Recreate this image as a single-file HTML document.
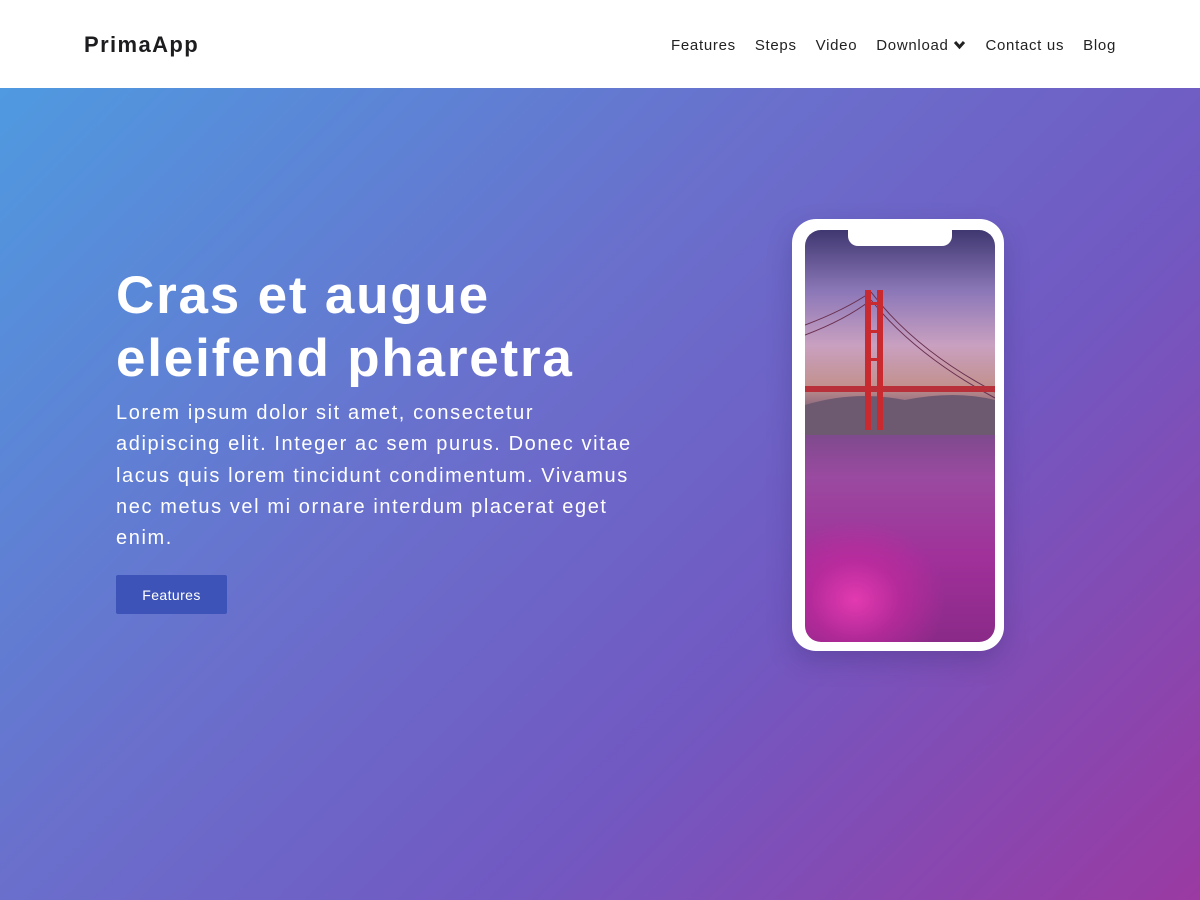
<!DOCTYPE html>
<html><head><style>
*{margin:0;padding:0;box-sizing:border-box}
body{width:1200px;height:900px;overflow:hidden;font-family:"Liberation Sans",sans-serif}
header{height:88px;background:#fff;position:relative}
.logo{position:absolute;left:84px;top:32px;font-size:22px;font-weight:bold;color:#1d1d1f;letter-spacing:1.4px}
nav{position:absolute;right:84px;top:37px;font-size:15px;color:#222;display:flex;gap:19px;letter-spacing:0.7px}
.hero{position:absolute;top:88px;left:0;width:1200px;height:812px;background:linear-gradient(135deg,#4f9ae0 0%,#6a6fcc 40%,#7159c2 65%,#9a3aa2 100%)}
h1{position:absolute;left:116px;top:176px;color:#fff;font-size:53px;line-height:63px;font-weight:bold;letter-spacing:1.8px}
p{position:absolute;left:116px;top:310px;width:520px;color:#fff;font-size:20px;line-height:31.3px;letter-spacing:1.6px}
.btn{position:absolute;left:116px;top:487px;width:111px;height:39px;background:#3d53b8;color:#fff;font-size:14px;text-align:center;line-height:41px;border-radius:2px;letter-spacing:0.4px}
.phone{position:absolute;left:792px;top:131px;width:212px;height:432px;background:#fff;border-radius:24px;box-shadow:0 10px 25px rgba(40,30,90,.25)}
.screen{position:absolute;left:13px;top:11px;width:190px;height:412px;border-radius:16px;overflow:hidden;
background:radial-gradient(ellipse 90px 80px at 50px 370px,#e33ab0 0%,rgba(200,40,160,.6) 50%,transparent 100%),linear-gradient(180deg,#3f3770 0%,#8c78b8 15%,#c9a0c0 28%,#c2918e 38%,#80607a 44%,#7a4a8a 48%,#9a4aa0 60%,#a0309a 80%,#8a2a88 100%)}
.notch{position:absolute;left:43px;top:0;width:104px;height:16px;background:#fff;border-radius:0 0 10px 10px}
</style></head><body>
<header><div class="logo">PrimaApp</div>
<nav><span>Features</span><span>Steps</span><span>Video</span><span>Download <svg width="13" height="10" viewBox="0 0 13 10" style="vertical-align:0"><path d="M2 2 L6.5 7 L11 2" stroke="#222" stroke-width="3" fill="none"/></svg></span><span>Contact us</span><span>Blog</span></nav></header>
<div class="hero">
<h1>Cras et augue<br>eleifend pharetra</h1>
<p>Lorem ipsum dolor sit amet, consectetur adipiscing elit. Integer ac sem purus. Donec vitae lacus quis lorem tincidunt condimentum. Vivamus nec metus vel mi ornare interdum placerat eget enim.</p>
<div class="btn">Features</div>
<div class="phone"><div class="screen">
<svg width="190" height="412" style="position:absolute;left:0;top:0">
<path d="M0 95 Q40 80 66 62 M66 62 Q110 120 190 162 M0 105 Q40 90 66 70 M66 70 Q110 125 190 168" stroke="#6a3050" stroke-width="1" fill="none"/>
<path d="M0 175 Q50 160 100 170 Q150 160 190 170 L190 205 L0 205Z" fill="#6e5a70"/>
<rect x="0" y="156" width="190" height="6" fill="#b8303a"/>
<rect x="60" y="60" width="6" height="140" fill="#c82a30"/>
<rect x="72" y="60" width="6" height="140" fill="#c82a30"/>
<rect x="60" y="72" width="18" height="3" fill="#c82a30"/>
<rect x="60" y="100" width="18" height="3" fill="#c82a30"/>
<rect x="60" y="128" width="18" height="3" fill="#c82a30"/>
</svg>
<div class="notch"></div></div></div>
</div>
</body></html>
